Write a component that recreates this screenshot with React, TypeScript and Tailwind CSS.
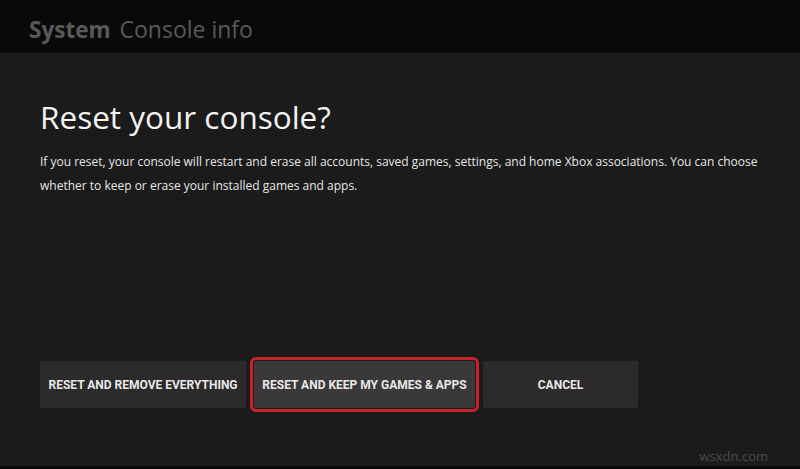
import React from "react";

const buttons = [
  { label: "RESET AND REMOVE EVERYTHING", width: "w-[206px]", selected: false },
  { label: "RESET AND KEEP MY GAMES & APPS", width: "w-[221px]", selected: true },
  { label: "CANCEL", width: "w-[155px]", selected: false }
];

export default function App() {
  return (
    <div className="flex h-[469px] w-[800px] flex-col overflow-hidden bg-[#1c1b1b] font-['Open_Sans',sans-serif]">
      <header className="flex h-[53px] shrink-0 items-center bg-[#0a0909] pl-[29px] pt-[6px]">
        <span className="text-[22.5px] font-bold text-[#595959]">System</span>
        <span className="ml-[9px] text-[23px] text-[#595959]">Console info</span>
      </header>

      <main className="flex flex-1 flex-col pl-[40px] pr-[4px] pt-[40px]">
        <h1 className="text-[31.5px] leading-[48px] text-[#f2f2f2]">Reset your console?</h1>
        <p className="mt-[9px] text-[12px] leading-[24px] text-[#e6e6e6]">
          If you reset, your console will restart and erase all accounts, saved games, settings, and home Xbox associations. You can choose whether to keep or erase your installed games and apps.
        </p>

        <div className="mt-[163px] flex gap-[7px]">
          {buttons.map((b) => (
            <button
              key={b.label}
              type="button"
              className={
                b.selected
                  ? `${b.width} h-[47px] rounded-[2px] bg-[#3a3838] font-['Roboto',sans-serif] text-[12px] font-bold text-[#e8e8e8] outline outline-[3px] outline-offset-1 outline-[#c9202b] mx-[1px]`
                  : `${b.width} h-[47px] rounded-[2px] bg-[#2c2a2a] font-['Roboto',sans-serif] text-[12px] font-bold text-[#e8e8e8]`
              }
            >
              {b.label}
            </button>
          ))}
        </div>

        <div className="mt-auto flex justify-end pr-[28px]">
          <span className="text-[13px] text-[#4a4a4a]">wsxdn.com</span>
        </div>
      </main>
      <div className="h-[3px] shrink-0 bg-[#0a0909]" />
    </div>
  );
}
